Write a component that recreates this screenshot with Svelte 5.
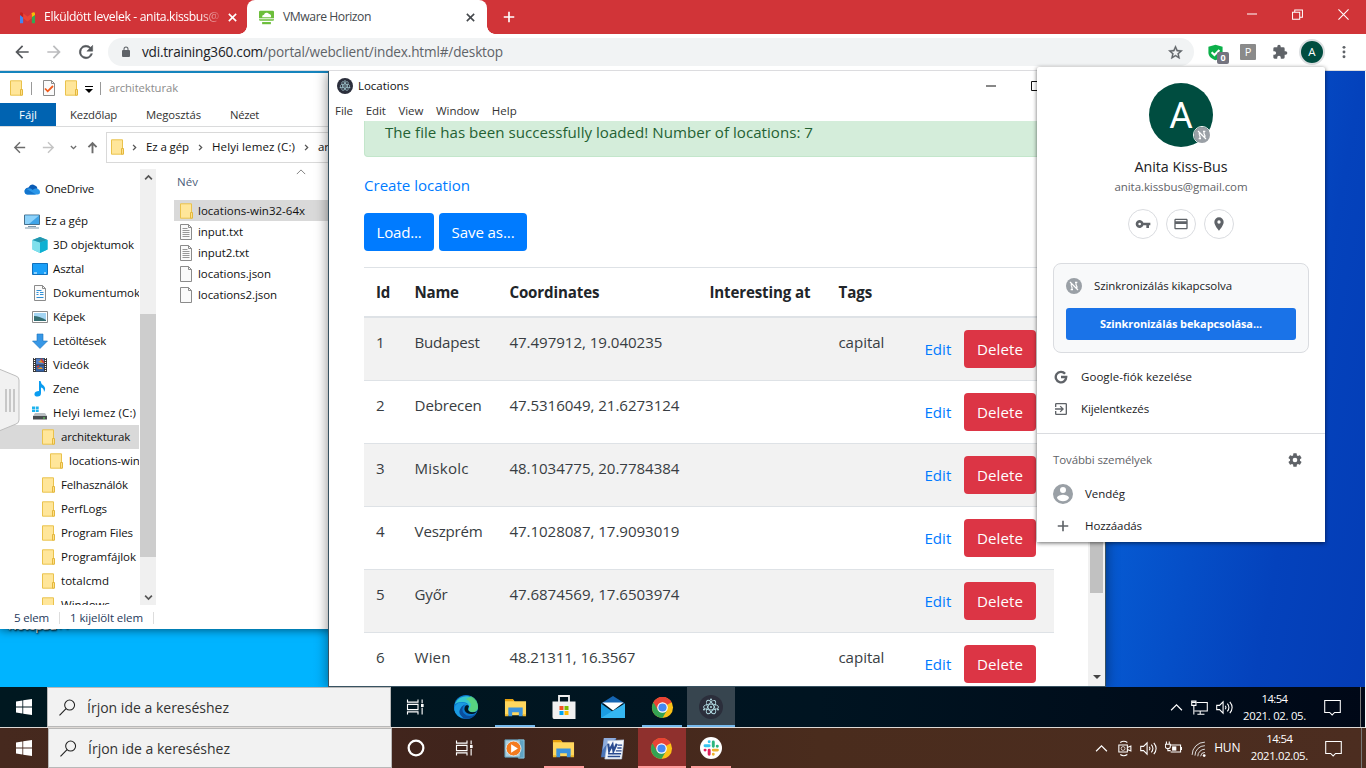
<script>
  // Adjusts tracking so a label occupies its intended width.
  function fit(node, width) {
    if (!width) return;
    const natural = node.getBoundingClientRect().width;
    node.style.letterSpacing = (width - natural) / node.textContent.length + 'px';
  }

  const folder = '<path d="M2.500.8h11v14.400h-11z" fill="#ffe69a" stroke="#eac24c"/><path d="M12.500 9.500h2v5.700h-2z" fill="#ffe08a" stroke="#e3b73c"/>';
  const page = '<path d="M2.500.5h8l3 3v12h-11z" fill="#fafafa" stroke="#8b8b8b"/><path d="M10.500.5v3h3" fill="none" stroke="#8b8b8b"/>';
  const chrome = '<circle cx="12" cy="12" r="11" fill="#fbc116"/><path d="M12 12 2.500 6.500A11 11 0 0 1 21.500 6.500z" fill="#e94335"/><path d="M2.500 6.500A11 11 0 0 0 12 23l4.800-8.300L12 12z" fill="#34a353"/><path d="M12 6.500h9.500A11 11 0 0 0 2.500 6.500l4.700 8z" fill="#e94335"/><circle cx="12" cy="12" r="5.500" fill="#fff"/><circle cx="12" cy="12" r="4.300" fill="#4688f1"/>';
  const electron = '<circle cx="12" cy="12" r="12" fill="#2b2e3b"/><g fill="none" stroke="#b3dce4" stroke-width=".9"><ellipse cx="12" cy="12" rx="7.500" ry="2.900"/><ellipse cx="12" cy="12" rx="7.500" ry="2.900" transform="rotate(60 12 12)"/><ellipse cx="12" cy="12" rx="7.500" ry="2.900" transform="rotate(120 12 12)"/></g><g fill="#b3dce4"><circle cx="12" cy="12" r="1"/><circle cx="5" cy="14.500" r="1"/><circle cx="19" cy="14.500" r="1"/><circle cx="12" cy="4.500" r="1"/></g>';
  const syncOff = '<g fill="none" stroke="#fff" stroke-width="1.800"><path d="M10.500 17.500H7M9 17.500V14q-2.500-3-.5-6M13.500 6.500H17M15 6.500V10q2.500 3 .5 6M6 6l12 12"/></g>';

  const icons = {
    folder, page, chrome, electron,
    gmail: '<path d="M0 6v15h5V11L0 7" fill="#4285f4"/><path d="M19 11v10h5V6z" fill="#34a853"/><path d="M18 5v7l6-4V6q0-4-6-1" fill="#fbbc04"/><path d="M5 13V5l7 5.500L19 5v8l-7 5.500z" fill="#ea4335"/><path d="M0 8V6q0-4 5-1v7z" fill="#c5221f"/>',
    vmware: '<rect x="0" y="1" width="24" height="16" rx="2" fill="#6cbe3b"/><path d="M5 11.500a3.500 3.500 0 0 1 3-4 4.500 4.500 0 0 1 8-1 3.500 3.500 0 0 1 3 5z" fill="#fff"/><path d="M0 14h24" stroke="#fff" stroke-width="1.500"/><path d="M5 21h14" stroke="#6cbe3b" stroke-width="3.500"/>',
    close: '<path d="M4 4l16 16M20 4L4 20" fill="none" stroke="currentColor" stroke-width="3.400"/>',
    plus: '<path d="M12 3v18M3 12h18" fill="none" stroke="currentColor" stroke-width="2.800"/>',
    back: '<path d="M20 11H7.830l5.590-5.590L12 4l-8 8 8 8 1.410-1.410L7.830 13H20z" fill="currentColor"/>',
    forward: '<path d="M4 13h12.170l-5.590 5.590L12 20l8-8-8-8-1.410 1.410L16.170 11H4z" fill="currentColor"/>',
    up: '<path d="M12 21V5M5.500 11.500L12 5l6.500 6.500" fill="none" stroke="currentColor" stroke-width="3"/>',
    reload: '<path d="M17.650 6.350A8 8 0 1 0 19.730 14h-2.080A6 6 0 1 1 12 6c1.660 0 3.140.69 4.220 1.780L13 11h7V4z" fill="currentColor" stroke="currentColor" stroke-width=".6"/>',
    lock: '<path d="M18 8h-1V6A5 5 0 0 0 7 6v2H6a2 2 0 0 0-2 2v10a2 2 0 0 0 2 2h12a2 2 0 0 0 2-2V10a2 2 0 0 0-2-2zM9 8V6a3 3 0 0 1 6 0v2z" fill="currentColor"/>',
    star: '<path d="M22 9.240l-7.190-.62L12 2 9.190 8.630 2 9.240l5.460 4.730L5.820 21 12 17.270 18.180 21l-1.630-7.030L22 9.240zM12 15.400l-3.760 2.270 1-4.280-3.320-2.880 4.380-.38L12 6.100l1.710 4.040 4.380.38-3.320 2.880 1 4.280z" fill="currentColor" stroke="currentColor" stroke-width=".5"/>',
    shield: '<path d="M12 1l10 3v8c0 6-5 9-10 11C7 21 2 18 2 12V4z" fill="#0cb04a"/><path d="M6.500 11.500l4 4 7-7" fill="none" stroke="#fff" stroke-width="3"/>',
    puzzle: '<path d="M20.500 11H19V7a2 2 0 0 0-2-2h-4V3.500a2.500 2.500 0 0 0-5 0V5H4a2 2 0 0 0-2 2v3.800h1.500a2.700 2.700 0 0 1 0 5.400H2V20c0 1.100.9 2 2 2h3.800v-1.500a2.700 2.700 0 0 1 5.400 0V22H17a2 2 0 0 0 2-2v-4h1.500a2.500 2.500 0 0 0 0-5z" fill="currentColor"/>',
    dots: '<g fill="currentColor"><circle cx="12" cy="4" r="2.500"/><circle cx="12" cy="12" r="2.500"/><circle cx="12" cy="20" r="2.500"/></g>',
    min: '<path d="M0 12h24" stroke="currentColor" stroke-width="2.400"/>',
    restore: '<path d="M1.200 7h15.600v15.600H1.200zM6 7V2h16.800v16H17" fill="none" stroke="currentColor" stroke-width="2.200"/>',
    thinx: '<path d="M1 1l22 22M23 1L1 23" stroke="currentColor" stroke-width="2.400"/>',
    box: '<path d="M1.200 1.200h21.600v21.600H1.200z" fill="none" stroke="currentColor" stroke-width="2.400"/>',
    check: page + '<path d="M4 8.500l2.700 2.800L12 6" fill="none" stroke="#f05a1c" stroke-width="1.800"/>',
    text: page + '<path d="M4.500 4.500h5M4.500 6.500h7M4.500 8.500h7M4.500 10.500h7M4.500 12.500h7" stroke="#8c8c8c" stroke-width=".9"/>',
    doc: page + '<path d="M4.500 5.500h5M4.500 7.500h2M8 7.500h3.500M4.500 9.500h2M8 9.500h3.500M4.500 12.500h7" stroke="#2f8fd6" stroke-width="1.200"/>',
    cloud: '<path d="M1 11.500Q0 7 4.500 6.500 7 1.500 11 4.500q2 .5 2.500 3l-6 3z" fill="#0a5bb5"/><path d="M3.500 13.500a3 3 0 0 1 .3-6q3-1 5 1.500 1-2 3.600-1.500Q16 8 16 11q0 2.500-2.500 2.500z" fill="#2a96e8"/><path d="M3.500 13.500a3 3 0 0 1-1.300-5.700L12 13.500z" fill="#1375cd"/>',
    pc: '<path d="M.5 2h15v9.500H.5z" fill="#3fa4e8" stroke="#47708c"/><path d="M1 2.500h14L5 11H1z" fill="#8dd2fa"/><path d="M4 13.500h8M1 15h14" stroke="#7b96a8"/>',
    cube: '<path d="M8 0l7.500 3v9.500L8 16 .5 12.500V3z" fill="#35c3df"/><path d="M.5 3L8 5.500V16L.5 12.500z" fill="#7fe0ec"/><path d="M.5 3L8 0l7.500 3L8 5.500z" fill="#2396ae"/><path d="M8 5.500L15.500 3v9.500L8 16z" fill="#0eb0d2"/>',
    desktop: '<path d="M.5 2.500h15v11H.5z" fill="#1ba0f8" stroke="#1171bd"/><path d="M2 12h3M12 12h2" stroke="#fff"/>',
    image: '<path d="M.5 2.500h15v11H.5z" fill="#fff" stroke="#8c8c8c"/><path d="M2 4h12v8H2z" fill="#a4d5f3"/><path d="M2 7q5 0 12 4v1H2z" fill="#356e72"/>',
    down: '<path d="M5 1h6v7h4.500L8 15.500.5 8H5z" fill="#3797e6" stroke="#1d74be" stroke-width=".6"/>',
    video: '<path d="M1 1h14v14H1z" fill="#353535"/><path d="M4 1.500h8v6H4z" fill="#507ec9"/><path d="M4 8.500h8v6H4z" fill="#3463a8"/><path d="M6 5l3-2 2 3zM5 12l4-2 2 2z" fill="#e39b26"/><path d="M9 2l3 4M5 10l2-1" stroke="#d83c2c" stroke-width="1.500"/><path d="M2.500 1v14M13.500 1v14" stroke="#fff" stroke-width="1.200" stroke-dasharray="1 1"/>',
    music: '<path d="M7 0h1.500q.5 3 3 4.500 3 3 .5 6.500Q12 7 9 6.500V12q0 3.500-3.500 3.500T2.500 12.700Q3 10 7 10z" fill="#0a9cf0"/>',
    disk: '<path d="M0 1.500h3v2.500H0zM3.700 1.500h3v2.500h-3zM0 4.600h3v2.500H0zM3.700 4.600h3v2.500h-3z" fill="#1eb3ee"/><path d="M3 8h10l2 3H1z" fill="#b9bec2"/><path d="M1 11h14v3.500H1z" fill="#484c4f"/><path d="M11 13h2" stroke="#63e05a"/>',
    key: '<path d="M12.650 10A6 6 0 1 0 12.650 14H17v4h4v-4h2v-4zM7 14a2 2 0 1 1 0-4 2 2 0 0 1 0 4z" fill="currentColor"/>',
    card: '<path d="M20 4H4c-1.110 0-2 .89-2 2v12c0 1.110.89 2 2 2h16c1.110 0 2-.89 2-2V6c0-1.110-.89-2-2-2zm0 14H4v-6h16v6zm0-10H4V6h16v2z" fill="currentColor"/>',
    pin: '<path d="M12 2a7 7 0 0 0-7 7c0 5.250 7 13 7 13s7-7.750 7-13a7 7 0 0 0-7-7zm0 9.500a2.500 2.500 0 1 1 0-5 2.500 2.500 0 0 1 0 5z" fill="currentColor"/>',
    sync: '<circle cx="12" cy="12" r="12" fill="#9aa0a6"/>' + syncOff,
    google: '<path d="M19 6.500A9 9 0 1 0 21 12h-9" fill="none" stroke="currentColor" stroke-width="4"/>',
    exit: '<path d="M10.090 15.590L11.500 17l5-5-5-5-1.410 1.410L12.670 11H3v2h9.670zM19 3H5a2 2 0 0 0-2 2v4h2V5h14v14H5v-4H3v4a2 2 0 0 0 2 2h14a2 2 0 0 0 2-2V5a2 2 0 0 0-2-2z" fill="currentColor"/>',
    gear: '<path d="M19.430 12.980a7.800 7.800 0 0 0 0-1.960l2.110-1.650a.5.5 0 0 0 .12-.64l-2-3.460a.5.5 0 0 0-.61-.22l-2.490 1a7.300 7.300 0 0 0-1.690-.98l-.38-2.650A.5.5 0 0 0 14 2h-4a.5.5 0 0 0-.49.420l-.38 2.650c-.61.25-1.170.59-1.690.98l-2.490-1a.5.5 0 0 0-.61.22l-2 3.460a.5.5 0 0 0 .12.640l2.110 1.650a7.900 7.900 0 0 0 0 1.960l-2.110 1.650a.5.5 0 0 0-.12.640l2 3.460c.12.220.39.300.61.220l2.490-1c.52.4 1.080.73 1.690.98l.38 2.650c.3.240.24.420.49.420h4c.25 0 .46-.18.490-.42l.38-2.650c.61-.25 1.170-.59 1.690-.98l2.490 1c.23.090.49 0 .61-.22l2-3.460a.5.5 0 0 0-.12-.64zM12 15.500a3.500 3.500 0 1 1 0-7 3.500 3.500 0 0 1 0 7z" fill="currentColor"/>',
    person: '<path d="M12 0a12 12 0 1 0 0 24 12 12 0 0 0 0-24zm0 3.600a3.600 3.600 0 1 1 0 7.200 3.600 3.600 0 0 1 0-7.200zM12 20.600a8.600 8.600 0 0 1-7.200-3.900c0-2.400 4.800-3.700 7.200-3.700s7.200 1.300 7.200 3.700A8.600 8.600 0 0 1 12 20.600z" fill="#9aa0a6" fill-rule="evenodd"/>',
    windows: '<path d="M0 3.600L9.600 2.200v9.200H0zM10.800 2L24 0v11.400H10.800zM0 12.600h9.600v9.200L0 20.400zM10.800 12.600H24V24l-13.200-1.900z" fill="#fff"/>',
    search: '<circle cx="15" cy="8.500" r="7" fill="none" stroke="#222" stroke-width="1.500"/><path d="M10 13.500L.7 23" stroke="#222" stroke-width="1.600"/>',
    taskview: '<path d="M2 2v3.500h14V2M2 22v-3.500h14V22M2 8.500h14v7H2zM21.500 2v5M21.500 13v9" fill="none" stroke="#fff" stroke-width="1.500"/><path d="M20 8h3.500v4H20z" fill="#fff"/>',
    edge: '<circle cx="12" cy="12" r="12" fill="#0b78cf"/><path d="M1 8.500A12 12 0 0 1 24 12q0 5-6 5-4-.4-3.500-3Q16.500 8 9 7 4 6.500 1 9z" fill="#37c7d0"/><path d="M17 1.200A12 12 0 0 1 24 12q0 5-6 5-3-.2-3.500-2Q20 8 12 4z" fill="#62d66d" opacity=".8"/><path d="M10 9.500Q3 16 10 23 2 22 .3 15 0 8.500 7 7.500q6 0 8 4-2-2-5-2z" fill="#1a9be2"/><path d="M10.500 10q-4 4-.5 8.500 5 5 12 0-4 6.500-12 5-7-5-3.500-10 1-3 4-3.500z" fill="#0a4e9d"/><path d="M15 11q-.8 1.300-1 3 0 3 4.500 3.200 3.500 0 4.500-1.500-1 3-5 3.300-6 .2-7.500-4Q10 11 13 10z" fill="#001520"/>',
    explorer: '<path d="M1 3h8l2 2.500h12V20H1z" fill="#ffd75e"/><path d="M1 3h8l2 2.500H1z" fill="#e6a00d"/><path d="M4.500 12h15v9h-4v-4h-7v4h-4z" fill="#3b92dc"/><path d="M1 19h3.500v2H1zM19.500 19H23v2h-3.500z" fill="#ecb62c"/>',
    store: '<path d="M7 7V1h10v6" fill="none" stroke="#f1f1f1" stroke-width="1.800"/><path d="M.5 6.500h23V24H2Q.5 24 .5 22z" fill="#f1f1f1"/><path d="M7.500 11h4v4h-4z" fill="#f25022"/><path d="M12.500 11h4v4h-4z" fill="#7fba00"/><path d="M7.500 16h4v4h-4z" fill="#00a4ef"/><path d="M12.500 16h4v4h-4z" fill="#ffb900"/>',
    mail: '<path d="M0 8.500L12 1l12 7.500z" fill="#1565b2"/><path d="M0 8.500L12 17 24 8.500V23H0z" fill="#1b9de2"/><path d="M0 23L24 8.500V23z" fill="#35b7f2"/><path d="M1.500 7.500h21L12 15.500z" fill="#fff"/>',
    circle: '<circle cx="12" cy="12" r="9.800" fill="none" stroke="#fff" stroke-width="3"/>',
    media: '<path d="M16 3h6v19h-6z" fill="#5fa3c4" stroke="#8cc6de"/><path d="M2 3h16v18H2z" fill="#a9cfe0" stroke="#5e9bb7"/><circle cx="11" cy="12" r="7.800" fill="#f47b1f" stroke="#d9e9f0"/><path d="M8.500 7.500l7 4.500-7 4.500z" fill="#fff"/>',
    word: '<path d="M3 1h13L12 21H0z" fill="#4a74b8"/><path d="M3 1h13l-3 3Q5 7 1.500 14z" fill="#8eacdc"/><path d="M7 4l17-1-2.500 20H4z" fill="#f5f8fc" stroke="#b5c6de" stroke-width=".7"/><path d="M7.500 7l1 7.500L12 8l1 6.500L16.500 7" fill="none" stroke="#2a4b90" stroke-width="2.300"/><path d="M17.500 8.500H22M17 11.500h4.500M15.500 14.500h6M7.500 17.500h13.500M7 20.300h13" stroke="#2a4b90" stroke-width="1.400"/>',
    slack: '<circle cx="12" cy="12" r="12" fill="#fff"/><g fill="none" stroke-width="3.200" stroke-linecap="round"><path d="M10 9.500H5.500M10 5.200v.1" stroke="#36c5f0"/><path d="M14.500 5.500v4.500M18.800 10h.1" stroke="#2eb67d"/><path d="M14.500 14.300H19M14.500 18.700v.1" stroke="#ecb22e"/><path d="M10 14.300v4.500M5.500 14.300h.1" stroke="#e01e5a"/></g>',
    caret: '<path d="M2 17L12 7l10 10" fill="none" stroke="currentColor" stroke-width="2.200"/>',
    bold: '<path d="M3 17L12 8l9 9" fill="none" stroke="currentColor" stroke-width="4.500"/>',
    monitor: '<path d="M8 5h15v12H5M13 17v4M9 21.500h10M1 3h6v6H1zM4 9v13M1 5h6" fill="none" stroke="#fff" stroke-width="1.500"/>',
    speaker: '<path d="M1 9h4l5-5v16l-5-5H1z" fill="none" stroke="#fff" stroke-width="1.500"/><path d="M13 9.500q2 2.500 0 5M16 6.500q4.500 5.500 0 11M19.500 4q6.500 8 0 16" fill="none" stroke="#fff" stroke-width="1.500"/>',
    camera: '<path d="M4 7h12v10H4zM16 10.500l5-2v7l-5-2M6 3.500q5-3.500 10 0M6 20.500q5 3.500 10 0" fill="none" stroke="#fff" stroke-width="1.500"/><circle cx="10" cy="12" r="2.700" fill="none" stroke="#fff"/>',
    battery: '<path d="M8 7h14v10H8M23.500 10v4M2 2v4M6 2v4M.5 6h7v3q0 3-3.500 3T.5 9zM4 12v3h4" fill="none" stroke="#fff" stroke-width="1.500"/><path d="M10 9h6v6h-6z" fill="#fff"/>',
    wifi: '<path d="M3 21A18 18 0 0 1 21 3M7 22A14 14 0 0 1 21 8M11 23a10 10 0 0 1 10-10M15 23a6 6 0 0 1 6-5.500" fill="none" stroke="#ddd" stroke-width="1.400"/><circle cx="20" cy="22" r="2" fill="#fff"/>',
    notice: '<path d="M1 2h22v17h-8l-3.500 3.500L8 19H1z" fill="none" stroke="#fff" stroke-width="1.500"/>'
  };

  const navRows = [
    ['pc', 'Ez a gép', 0, 43], ['cube', '3D objektumok', 8, 81], ['desktop', 'Asztal', 8, 31],
    ['doc', 'Dokumentumok', 8, 87], ['image', 'Képek', 8, 32], ['down', 'Letöltések', 8, 53],
    ['video', 'Videók', 8, 36], ['music', 'Zene', 8, 26], ['disk', 'Helyi lemez (C:)', 8, 83],
    ['folder', 'architekturak', 16, 69], ['folder', 'locations-win32-64x', 24, 107],
    ['folder', 'Felhasználók', 16, 67], ['folder', 'PerfLogs', 16, 46],
    ['folder', 'Program Files', 16, 72], ['folder', 'Programfájlok', 16, 75],
    ['folder', 'totalcmd', 16, 48], ['folder', 'Windows', 16, 49]
  ];
  const files = [
    ['folder', 'locations-win32-64x', 107], ['text', 'input.txt', 45], ['text', 'input2.txt', 51],
    ['page', 'locations.json', 73], ['page', 'locations2.json', 79]
  ];
  const places = [
    [1, 'Budapest', 65, '47.497912, 19.040235', 153, 'capital'],
    [2, 'Debrecen', 67, '47.5316049, 21.6273124', 170, ''],
    [3, 'Miskolc', 54, '48.1034775, 20.7784384', 170, ''],
    [4, 'Veszprém', 68, '47.1028087, 17.9093019', 170, ''],
    [5, 'Győr', 33, '47.6874569, 17.6503974', 170, ''],
    [6, 'Wien', 36, '48.21311, 16.3567', 126, 'capital']
  ];
  const remoteApps = [['edge', ''], ['explorer', 'short'], ['store', ''], ['mail', ''], ['chrome', 'short'], ['electron', 'active']];
  const localApps = [['media', ''], ['explorer', 'short'], ['word', ''], ['chrome', 'active'], ['slack', 'short']];
</script>

{#snippet icon(name, size = 16, box = 24)}
  <svg class="icon" width={size} height={size} viewBox="0 0 {box} {box}">{@html icons[name]}</svg>
{/snippet}
{#snippet label(text, width)}<span class="label" use:fit={width}>{text}</span>{/snippet}
{#snippet searchbox()}
  <div class="search">{@render icon('search', 17)}{@render label('Írjon ide a kereséshez', 142)}</div>
{/snippet}

<div class="screen">
  <header class="tabs">
    <div class="tab first">
      {@render icon('gmail', 15)}
      <div class="fade">{@render label('Elküldött levelek - anita.kissbus@', 175)}</div>
      {@render icon('close', 11)}
    </div>
    <div class="tab current">
      {@render icon('vmware', 15)}
      {@render label('VMware Horizon', 88)}
      <i></i>{@render icon('close', 11)}
    </div>
    <div class="newtab">{@render icon('plus', 14)}</div>
    <div class="controls">{@render icon('min', 10)}{@render icon('restore', 11)}{@render icon('thinx', 11)}</div>
  </header>
  <div class="toolbar">
    <div class="navbuttons">
      {@render icon('back', 20)}
      <span class="dim">{@render icon('forward', 20)}</span>
      {@render icon('reload', 20)}
    </div>
    <div class="omnibox">
      {@render icon('lock', 12)}
      <span class="host">{@render label('vdi.training360.com', 121)}</span>{@render label('/portal/webclient/index.html#/desktop', 240)}
      <i></i>{@render icon('star', 17)}
    </div>
    <div class="extensions">
      <span class="shield">{@render icon('shield', 17)}<b>0</b></span>
      <span class="pbox">P</span>
      {@render icon('puzzle', 16)}
      <span class="mini">A</span>
      {@render icon('dots', 14)}
    </div>
  </div>

  <main class="desktop">
    <div class="shortcut">Notepad++</div>
    <section class="explorer">
      <div class="quick">
        {@render icon('folder', 16, 16)}<u></u>{@render icon('check', 16, 16)}{@render icon('folder', 16, 16)}
        <span class="drop"></span><u></u>{@render label('architekturak', 69)}
      </div>
      <div class="ribbon">
        <strong>{@render label('Fájl', 18)}</strong>
        {@render label('Kezdőlap', 47)}{@render label('Megosztás', 55)}{@render label('Nézet', 29)}
      </div>
      <div class="address">
        <div class="arrows">
          {@render icon('back', 17)}<span class="dim">{@render icon('forward', 17)}</span>
          <span class="flip">{@render icon('bold', 7)}</span>{@render icon('up', 15)}
        </div>
        <div class="path">
          {@render icon('folder', 16, 16)}<em>{@render icon('bold', 7)}</em>
          {@render label('Ez a gép', 43)}<em>{@render icon('bold', 7)}</em>
          {@render label('Helyi lemez (C:)', 83)}<em>{@render icon('bold', 7)}</em>
          {@render label('architekturak', 69)}
        </div>
      </div>
      <div class="panes">
        <nav>
          <div class="row one">{@render icon('cloud', 16, 16)}{@render label('OneDrive', 49)}</div>
          {#each navRows as [name, text, indent, width]}
            <div class="row" class:selected={text === 'architekturak'}>
              <span class="indent" style:width="{indent}px"></span>{@render icon(name, 16, 16)}{@render label(text, width)}
            </div>
          {/each}
        </nav>
        <div class="scroll"><span>{@render icon('bold', 9)}</span><span class="thumb"></span><span class="flip">{@render icon('bold', 9)}</span></div>
        <div class="list">
          <div class="head">{@render label('Név', 21)}<span>{@render icon('caret', 10)}</span></div>
          {#each files as [name, text, width], i}
            <div class="file" class:selected={i === 0}>{@render icon(name, 16, 16)}{@render label(text, width)}</div>
          {/each}
        </div>
      </div>
      <footer>{@render label('5 elem', 35)}<u></u>{@render label('1 kijelölt elem', 73)}<u></u></footer>
    </section>

    <section class="locations">
      <div class="title">
        {@render icon('electron', 16)}{@render label('Locations', 51)}
        <span class="winbtns">{@render icon('min', 10)}{@render icon('box', 10)}</span>
      </div>
      <div class="menu">
        {@render label('File', 18)}{@render label('Edit', 20)}{@render label('View', 25)}{@render label('Window', 43)}{@render label('Help', 25)}
      </div>
      <div class="viewport">
        <div class="content">
          <div class="alert">{@render label('The file has been successfully loaded! Number of locations: 7', 428)}</div>
          <a href="#create">{@render label('Create location', 106)}</a>
          <div class="actions"><button>{@render label('Load...', 45)}</button><button>{@render label('Save as...', 63)}</button></div>
          <div class="grid">
            <div class="line thead">
              <span>{@render label('Id', 14)}</span><span>{@render label('Name', 44)}</span>
              <span>{@render label('Coordinates', 90)}</span><span>{@render label('Interesting at', 101)}</span>
              <span>{@render label('Tags', 34)}</span><span></span>
            </div>
            {#each places as [id, name, nw, coords, cw, tag]}
              <div class="line">
                <span>{id}</span><span>{@render label(name, nw)}</span><span>{@render label(coords, cw)}</span>
                <span></span><span>{#if tag}{@render label(tag, 46)}{/if}</span>
                <span class="ops"><a href="#edit">{@render label('Edit', 27)}</a><button class="danger">{@render label('Delete', 46)}</button></span>
              </div>
            {/each}
          </div>
        </div>
        <div class="bar"><span></span><b></b></div>
      </div>
    </section>

    <div class="taskbar remote">
      <div class="start">{@render icon('windows', 16)}</div>
      {@render searchbox()}
      <div class="slot view">{@render icon('taskview', 18)}</div>
      {#each remoteApps as [name, state]}
        <div class="slot {state}">{@render icon(name, name === 'explorer' || name === 'chrome' ? 23 : 24)}</div>
      {/each}
      <div class="tray">
        {@render icon('caret', 13)}{@render icon('monitor', 17)}{@render icon('speaker', 17)}
        <div class="clock">{@render label('14:54', 26)}{@render label('2021. 02. 05.', 63)}</div>
        {@render icon('notice', 17)}<u></u>
      </div>
    </div>
    <div class="handle"><svg width="21" height="66" viewBox="0 0 21 66"><path d="M-1 2L16 9q3 1 3 4v40q0 3-3 4L-1 64z" fill="#f1f1f1" stroke="#bdbdbd"/><path d="M6 22v23M10 22v23M14 22v23" stroke="#b9b9b9" stroke-width="1.500"/></svg></div>
  </main>

  <div class="taskbar local">
    <div class="start">{@render icon('windows', 16)}</div>
    {@render searchbox()}
    <div class="slot">{@render icon('circle', 18)}</div>
    <div class="slot view">{@render icon('taskview', 18)}</div>
    {#each localApps as [name, state]}
      <div class="slot {state}">{@render icon(name, name === 'slack' ? 22 : 23)}</div>
    {/each}
    <div class="tray">
      {@render icon('caret', 13)}{@render icon('camera', 17)}{@render icon('speaker', 17)}{@render icon('battery', 17)}{@render icon('wifi', 17)}
      <span class="lang">{@render label('HUN', 26)}</span>
      <div class="clock">{@render label('14:54', 26)}{@render label('2021.02.05.', 57)}</div>
      {@render icon('notice', 17)}<u></u>
    </div>
  </div>

  <aside class="profile">
    <div class="avatar">A<span>{@render icon('sync', 16)}</span></div>
    <div class="name">{@render label('Anita Kiss-Bus', 93)}</div>
    <div class="mail">{@render label('anita.kissbus@gmail.com', 133)}</div>
    <div class="circles"><span>{@render icon('key', 16)}</span><span>{@render icon('card', 16)}</span><span>{@render icon('pin', 16)}</span></div>
    <div class="card">
      <div>{@render icon('sync', 16)}{@render label('Szinkronizálás kikapcsolva', 138)}</div>
      <button>{@render label('Szinkronizálás bekapcsolása...', 162)}</button>
    </div>
    <div class="item">{@render icon('google', 14)}{@render label('Google-fiók kezelése', 111)}</div>
    <div class="item">{@render icon('exit', 16)}{@render label('Kijelentkezés', 68)}</div>
    <div class="others">{@render label('További személyek', 99)}{@render icon('gear', 16)}</div>
    <div class="who">{@render icon('person', 20)}{@render label('Vendég', 40)}</div>
    <div class="who">{@render icon('plus', 14)}{@render label('Hozzáadás', 57)}</div>
  </aside>
</div>

<style>
  :global(body) { margin: 0; overflow: hidden; }
  .screen { position: relative; width: 1366px; height: 768px; overflow: hidden; display: flex; flex-direction: column; background: #fff; font: 11.500px/16px "Open Sans", "Noto Sans", sans-serif; color: #111; }
  .screen * { box-sizing: border-box; }
  .icon { display: block; flex: none; }
  .label { display: inline-block; white-space: pre; flex: none; }
  i { flex: 1; }
  button { border: 0; font: inherit; padding: 0; }
  a { color: #007bff; text-decoration: none; }
  .flip { transform: rotate(180deg); }
  .dim { opacity: .4; }

  .tabs { height: 34px; flex: none; display: flex; background: #d13438; color: #fff; font-size: 12.200px; }
  .tab { display: flex; align-items: center; }
  .first { width: 247px; padding-left: 20px; gap: 9px; }
  .fade { width: 175px; overflow: hidden; margin-right: -1px; -webkit-mask-image: linear-gradient(90deg, #000 88%, transparent 103%); mask-image: linear-gradient(90deg, #000 88%, transparent 103%); }
  .current { position: relative; width: 240px; padding: 0 11px 0 12px; gap: 9px; background: #fff; border-radius: 8px 8px 0 0; color: #45494d; }
  .current::before, .current::after { content: ""; position: absolute; bottom: 0; width: 8px; height: 8px; }
  .current::before { left: -8px; background: radial-gradient(circle at 0 0, #d13438 7.500px, #fff 8px); }
  .current::after { right: -8px; background: radial-gradient(circle at 100% 0, #d13438 7.500px, #fff 8px); }
  .newtab { padding: 10px 15px; }
  .controls { margin: 9px 17px 0 auto; display: flex; gap: 35px; }
  .toolbar { height: 37px; flex: none; display: flex; align-items: center; border-bottom: 1px solid #dcdcdf; color: #5f6368; }
  .navbuttons { display: flex; gap: 12px; padding-left: 12px; width: 108px; color: #55585c; }
  .omnibox { width: 1086px; height: 28px; border-radius: 14px; background: #f1f3f4; display: flex; align-items: center; padding: 0 10px 0 12px; font-size: 13.600px; }
  .host { color: #202124; margin-left: 10px; }
  .extensions { flex: 1; display: flex; align-items: center; padding-left: 13px; }
  .shield { position: relative; width: 33px; }
  .shield b { position: absolute; left: 10px; top: 8px; width: 12px; height: 12px; border-radius: 2px; background: #74747f; color: #fff; font-size: 9px; line-height: 12px; text-align: center; }
  .pbox { width: 16px; height: 16px; background: #8a8a8a; border-radius: 1px; color: #fff; text-align: center; font-size: 11px; margin-right: 16px; }
  .mini { width: 26px; height: 26px; border: 2px solid #dcdfe1; border-radius: 50%; background: #004d40; color: #fff; text-align: center; line-height: 22px; margin: 0 12px 0 11px; }

  .desktop { position: relative; height: 657px; flex: none; overflow: hidden; background: linear-gradient(100deg, #00b4ff 0, #00b4ff 28%, #065bd3 80%, #0442bc 92%, #043cb5 100%); border-right: 1px solid #f5f5f5; }
  .shortcut { position: absolute; left: 8px; top: 547px; color: #fff; font-size: 12px; text-shadow: 1px 1px 2px #000, 0 0 2px #000; }
  .explorer { position: absolute; left: 0; top: 0; width: 350px; height: 558px; border-top: 2px solid #1584bd; background: #fff; display: flex; flex-direction: column; box-shadow: 0 1px 9px #0008; }
  .quick { height: 30px; display: flex; align-items: center; padding-left: 8px; color: #8c8c8c; font-size: 11.300px; }
  .quick u { width: 1px; height: 13px; background: #999; margin: 0 9px 0 7px; }
  .quick u ~ u { margin-left: 7px; margin-right: 8px; }
  .quick .icon + .icon { margin-left: 6px; }
  .drop { width: 8px; height: 7px; margin: 2px 0 0 6px; background: linear-gradient(#000, #000) 0 0 / 8px 1px no-repeat; position: relative; }
  .drop::after { content: ""; position: absolute; left: 0; top: 3px; border: 4px solid transparent; border-top-color: #000; border-bottom: 0; }
  .ribbon { height: 24px; display: flex; align-items: center; border-bottom: 1px solid #dadbdc; color: #333; font-size: 11.300px; gap: 29px; }
  .ribbon strong { align-self: stretch; width: 56px; background: #0063b1; color: #fff; font-weight: 400; text-align: center; line-height: 23px; margin-right: -15px; }
  .address { height: 40px; display: flex; align-items: center; color: #111; }
  .arrows { width: 106px; flex: none; display: flex; align-items: center; padding-left: 11px; color: #6c6c6c; gap: 12px; }
  .arrows .flip { margin: 0 -4px 0 1px; }
  .path { height: 31px; width: 244px; flex: none; overflow: hidden; border: 1px solid #d9d9d9; display: flex; align-items: center; padding-left: 2px; white-space: nowrap; }
  .path em { flex: none; transform: rotate(90deg); width: 7px; margin: 0 8px; color: #555; }
  .path .icon + em { margin: 0 8px 0 6px; }
  .panes { height: 438px; display: flex; overflow: hidden; padding-top: 2px; }
  nav { width: 139px; height: 437px; overflow: hidden; }
  .row { height: 24px; display: flex; align-items: center; padding-left: 24px; white-space: nowrap; }
  .indent { flex: none; }
  .row .label { margin-left: 5px; }
  .one { margin: 8px 0 8px; }
  .row.selected, .file.selected { background: #d9d9d9; }
  .scroll { width: 17px; margin-left: 1px; height: 437px; background: #f0f0f0; display: flex; flex-direction: column; align-items: center; justify-content: space-between; color: #555; border-right: 1px solid #fff; padding: 4px 0; }
  .thumb { width: 100%; height: 243px; background: #cdcdcd; margin-top: 118px; margin-bottom: 22px; }
  .list { flex: 1; padding-left: 17px; }
  .head { height: 31px; display: flex; color: #4c607a; padding: 5px 0 0 3px; }
  .head span:last-child { margin: -7px 0 0 98px; color: #777; }
  .file { height: 21.100px; display: flex; align-items: center; padding-left: 4px; }
  .file .label { margin-left: 4px; }
  footer { height: 22px; display: flex; align-items: center; padding: 3px 0 0 14px; color: #1e395b; }
  footer u { width: 1px; height: 12px; background: #ddd; margin: 0 10px; }

  .locations { position: absolute; left: 328px; top: 0; width: 778px; height: 616px; background: #fff; border: solid #385261; border-width: 0 1px 1px; display: flex; flex-direction: column; box-shadow: 0 1px 12px #0007; }
  .title { height: 30px; display: flex; align-items: center; padding-left: 8px; gap: 5px; }
  .winbtns { display: flex; gap: 35px; margin-left: 572px; }
  .menu { height: 20px; display: flex; gap: 12.700px; align-items: center; padding-left: 6px; color: #333; }
  .viewport { display: flex; height: 565px; overflow: hidden; }
  .content { width: 759px; padding: 0 34px 0 35px; font-size: 15.100px; line-height: 24px; color: #383d42; }
  .alert { height: 36px; background: #d4edda; border: 1px solid #c3e6cb; border-top: 0; border-radius: 0 0 4px 4px; color: #246133; padding-left: 20px; margin-bottom: 16px; line-height: 22px; }
  .content > a { display: block; height: 40px; }
  .actions { display: flex; gap: 5px; height: 54px; }
  .content button { height: 38px; padding: 0 12.500px; background: #007bff; color: #fff; border-radius: 4px; white-space: nowrap; }
  .grid { border-top: 1px solid #dee2e6; }
  .line { display: grid; grid-template-columns: 38.600px 94.800px 200px 129px 86px 1fr; height: 63px; border-bottom: 1px solid #dee2e6; }
  .line > span { padding: 12px 0 0 12px; }
  .line:nth-child(even) { background: #f2f2f2; }
  .thead { height: 50px; font-weight: 700; color: #212529; border-bottom-width: 2px; }
  .ops { display: flex; align-items: center; height: 50px; gap: 12.600px; }
  .ops .danger { background: #dc3545; padding: 0 13px; }
  .bar { width: 17px; background: #f1f1f1; }
  .bar span { display: block; width: 13px; height: 472px; margin-left: 2px; background: #c1c1c1; }
  .bar b { display: block; width: 0; margin: 82px 0 0 5px; border: 4px solid transparent; border-top-color: #444; }

  .taskbar { display: flex; height: 40px; color: #fff; flex: none; }
  .remote { position: absolute; left: 0; right: 0; bottom: 0; height: 41px; background: linear-gradient(90deg, #001820, #001421 60%, #000817); border-bottom: 1px solid #ded9d5; }
  .local { background: linear-gradient(90deg, #46291e, #40241c 35%, #4a2c1d 60%, #4c2d20); }
  .start { width: 47px; display: grid; place-items: center; }
  .local .start { width: 48px; }
  .search { width: 344px; background: #f2f2f2; border: 1px solid #b8b8b8; display: flex; align-items: center; gap: 11px; padding-left: 11px; color: #333; font-size: 14px; }
  .search .label { padding-top: 1px; }
  .slot { width: 48px; margin-right: 1px; display: grid; place-items: center; position: relative; }
  .remote .view { margin-right: 3px; }
  .local .view { margin-right: 2.500px; }
  .local .slot:nth-child(3) { margin: 0; }
  .slot.active { background: #37454f; }
  .local .slot.active { background: #8f302d; }
  .short::after, .active::after { content: ""; position: absolute; bottom: 0; left: 4px; right: 4px; height: 2px; background: #76b9ed; }
  .active::after { left: 0; right: 0; }
  .local .slot::after { background: #ff9c9c; }
  .tray { margin-left: auto; display: flex; align-items: center; gap: 8px; }
  .local .tray { gap: 7.600px; }
  .tray > u { width: 1px; height: 100%; background: #777; margin: 0 4px 0 11px; }
  .clock { display: flex; flex-direction: column; align-items: center; font-size: 11.300px; line-height: 17px; margin: -1px 10px 0 2px; }
  .local .clock { margin-top: -2px; }
  .lang { font-size: 12px; margin-right: 1px; }

  .handle { position: absolute; left: 0; top: 296px; }

  .profile { position: absolute; left: 1037px; top: 67px; width: 288px; height: 475px; background: #fff; box-shadow: 0 1px 4px #0009; border-radius: 2px 2px 0 0; padding-top: 16px; display: flex; flex-direction: column; color: #202124; }
  .profile .icon { color: #5f6368; }
  .avatar { position: relative; width: 64px; height: 64px; border-radius: 50%; background: #004d40; color: #fff; margin: 0 auto 8px; font: 36px/66px Roboto, sans-serif; text-align: center; }
  .avatar span { position: absolute; right: 2px; bottom: 3px; border: 1px solid #fff; border-radius: 50%; }
  .name { text-align: center; font-size: 14.300px; line-height: 24px; }
  .mail { text-align: center; color: #5f6368; }
  .circles { display: flex; justify-content: center; gap: 8px; margin: 14px 0 24px; }
  .circles span { width: 30px; height: 30px; border: 1px solid #dadce0; border-radius: 50%; display: grid; place-items: center; }
  .card { margin: 0 16px 8px; height: 90px; border: 1px solid #dadce0; border-radius: 8px; background: #f8f9fa; padding: 12px; }
  .card div { display: flex; align-items: center; height: 20px; gap: 12px; margin-bottom: 12px; }
  .card button { width: 230px; height: 32px; background: #1a73e8; color: #fff; border-radius: 3px; font-weight: 700; font-size: 11px; }
  .item { height: 32px; display: flex; align-items: center; padding-left: 16px; gap: 12px; }
  .item:nth-of-type(6) { padding-left: 17px; gap: 13px; }
  .others { border-top: 1px solid #dadce0; margin-top: 8px; padding: 8px 22px 0 16px; height: 45px; display: flex; align-items: center; justify-content: space-between; color: #5f6368; }
  .who { height: 32px; display: flex; align-items: center; gap: 12px; padding-left: 16px; }
  .who:last-child { padding-left: 19px; gap: 15px; }
</style>
